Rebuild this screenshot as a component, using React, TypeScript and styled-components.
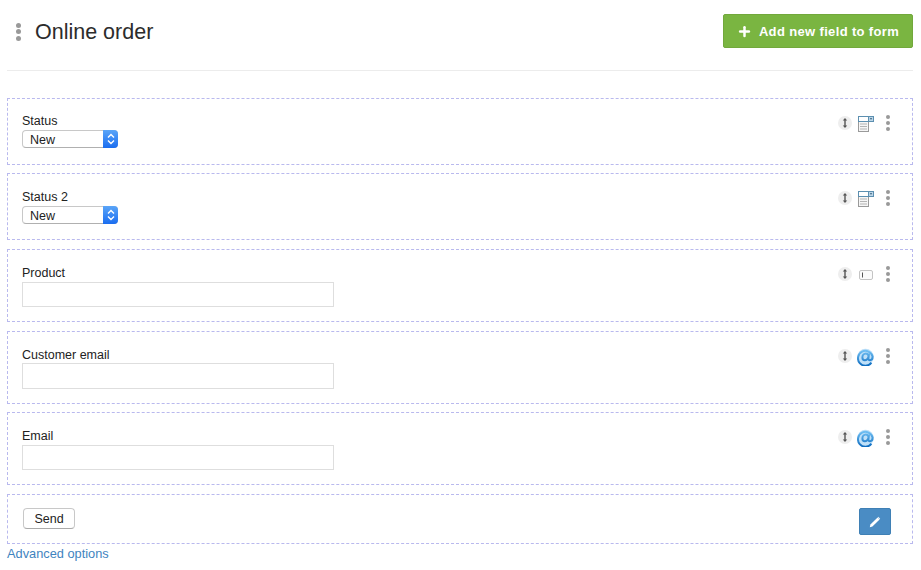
import styled, { createGlobalStyle } from 'styled-components';
import { Plus } from 'lucide-react';

const GlobalStyle = createGlobalStyle`
  html, body {
    margin: 0;
    padding: 0;
    background: #ffffff;
    font-family: 'Liberation Sans', Arial, sans-serif;
    overflow: hidden;
  }
`;

const Kebab = ({ size = 4 }: { size?: number }) => (
  <KebabWrapper $size={size}>
    <i />
    <i />
    <i />
  </KebabWrapper>
);

const MoveIcon = () => (
  <MoveBadge>
    <svg width="12" height="12" viewBox="0 0 12 12">
      <path d="M6 1 L8.2 3.6 H6.7 V8.4 H8.2 L6 11 L3.8 8.4 H5.3 V3.6 H3.8 Z" fill="#555" />
    </svg>
  </MoveBadge>
);

const SelectIcon = () => (
  <svg width="16" height="16" viewBox="0 0 16 16">
    <rect x="0.5" y="0.5" width="10" height="15" fill="#f6f6f6" stroke="#9a9a9a" />
    <rect x="0.5" y="0.5" width="15" height="5" fill="#fff" stroke="#5c8fb0" />
    <rect x="10.5" y="0.5" width="5" height="5" fill="#bcd6e8" stroke="#5c8fb0" />
    <path d="M11.8 2.2 H14.2 L13 3.8 Z" fill="#24506e" />
    <path d="M2 8 H9 M2 10.5 H9 M2 13 H9" stroke="#b4b4b4" />
  </svg>
);

const TextIcon = () => (
  <svg width="14" height="10" viewBox="0 0 14 10">
    <rect x="0.5" y="0.5" width="13" height="9" rx="1.5" fill="#fbfbfb" stroke="#c4c4c4" />
    <path d="M3.5 2.5 V7.5" stroke="#555" />
  </svg>
);

const AtIcon = () => (
  <svg width="17" height="18" viewBox="0 0 17 18">
    <defs>
      <linearGradient id="at" x1="0" y1="0" x2="0" y2="1">
        <stop offset="0" stopColor="#6fbef2" />
        <stop offset="1" stopColor="#0d6cc0" />
      </linearGradient>
    </defs>
    <circle cx="8.5" cy="9" r="8.3" fill="#a9d6f5" opacity="0.75" />
    <path
      d="M14.4 14.6 A7.4 7.4 0 1 1 15.6 8.6 C15.6 11 14.4 12.2 13 12.2 C12 12.2 11.4 11.6 11.4 10.6 L12 5.6 M11.6 8.2 C11.4 6.6 10.2 5.6 8.8 5.6 C6.8 5.6 5.4 7.4 5.4 9.4 C5.4 11.2 6.4 12.2 7.8 12.2 C9.6 12.2 11 10.4 11.6 8.2"
      fill="none"
      stroke="url(#at)"
      strokeWidth="2"
    />
  </svg>
);

const PencilIcon = () => (
  <svg width="12" height="12" viewBox="0 0 12 12">
    <path d="M0.8 11.2 L1.4 8.6 L8.6 1.4 L10.6 3.4 L3.4 10.6 Z" fill="#fff" />
    <path d="M9.3 0.8 L11.2 2.7 L10.7 3.2 L8.8 1.3 Z" fill="#fff" />
  </svg>
);

const fields = [
  { label: 'Status', type: 'select', extra: 0, nudge: 0, tall: false, icon: <SelectIcon /> },
  { label: 'Status 2', type: 'select', extra: 0, nudge: 1, tall: false, icon: <SelectIcon /> },
  { label: 'Product', type: 'text', extra: 1, nudge: 0, tall: false, icon: <TextIcon /> },
  { label: 'Customer email', type: 'text', extra: 1, nudge: 0, tall: true, icon: <AtIcon /> },
  { label: 'Email', type: 'text', extra: 0, nudge: 0, tall: false, icon: <AtIcon /> },
];

export default function App() {
  return (
    <Page>
      <GlobalStyle />
      <Header>
        <TitleGroup>
          <Kebab size={5} />
          <Title>Online order</Title>
        </TitleGroup>
        <AddButton>
          <Plus size={15} strokeWidth={4} color="#fff" />
          Add new field to form
        </AddButton>
      </Header>
      <FieldList>
        {fields.map((f) => (
          <FieldCard key={f.label} $kind={f.type} $extra={f.extra}>
            <FieldBody $nudge={f.nudge}>
              <FieldLabel $kind={f.type}>{f.label}</FieldLabel>
              {f.type === 'select' ? (
                <FakeSelect>
                  New
                  <SelectArrows>
                    <svg width="8" height="12" viewBox="0 0 8 12">
                      <path d="M1 4.5 L4 1.5 L7 4.5 M1 7.5 L4 10.5 L7 7.5" fill="none" stroke="#fff" strokeWidth="1.4" />
                    </svg>
                  </SelectArrows>
                </FakeSelect>
              ) : (
                <TextInput $tall={f.tall} />
              )}
            </FieldBody>
            <FieldTools>
              <MoveIcon />
              <IconSlot>{f.icon}</IconSlot>
              <Kebab />
            </FieldTools>
          </FieldCard>
        ))}
        <SubmitCard>
          <SendButton>Send</SendButton>
          <EditButton>
            <PencilIcon />
          </EditButton>
        </SubmitCard>
      </FieldList>
      <AdvancedLink>Advanced options</AdvancedLink>
    </Page>
  );
}

const Page = styled.div`
  width: 906px;
  margin-left: 7px;
  color: #222;
`;

const Header = styled.header`
  height: 70px;
  border-bottom: 1px solid #ececec;
  display: flex;
  align-items: flex-start;
  justify-content: space-between;
`;

const TitleGroup = styled.div`
  display: flex;
  align-items: center;
  gap: 14px;
  padding: 17px 0 0 9px;
`;

const KebabWrapper = styled.span<{ $size: number }>`
  display: inline-flex;
  flex-direction: column;
  gap: ${(p) => (p.$size === 5 ? 1.5 : 2)}px;
  i {
    display: block;
    width: ${(p) => p.$size}px;
    height: ${(p) => p.$size}px;
    border-radius: 50%;
    background: #999;
  }
`;

const Title = styled.h1`
  margin: 0;
  padding-top: 1px;
  font-size: 21.5px;
  line-height: 28px;
  font-weight: 400;
  color: #2c2c2c;
`;

const AddButton = styled.button`
  margin-top: 14px;
  width: 190px;
  height: 34px;
  display: flex;
  align-items: center;
  justify-content: center;
  gap: 7px;
  padding: 0;
  border: 1px solid #72a83c;
  border-radius: 2px;
  background: #7ab541;
  color: #fff;
  font-family: 'Liberation Sans', Arial, sans-serif;
  font-size: 13px;
  font-weight: 700;
  letter-spacing: 0.35px;
`;

const FieldList = styled.div`
  margin-top: 27px;
  display: flex;
  flex-direction: column;
  gap: 8px;
`;

const FieldCard = styled.section<{ $kind: string; $extra: number }>`
  box-sizing: border-box;
  height: ${(p) => (p.$kind === 'select' ? 67 : 73)}px;
  margin-top: ${(p) => p.$extra}px;
  border: 1px dashed #b9b9ee;
  padding: 15px 22px 0 14px;
  display: flex;
  justify-content: space-between;
  align-items: flex-start;
`;

const FieldBody = styled.div<{ $nudge: number }>`
  display: flex;
  flex-direction: column;
  padding-top: ${(p) => p.$nudge}px;
`;

const FieldLabel = styled.label<{ $kind: string }>`
  margin-top: ${(p) => (p.$kind === 'select' ? 0 : 1)}px;
  font-size: 12.5px;
  line-height: 15px;
  color: #222;
`;

const FakeSelect = styled.div`
  box-sizing: border-box;
  position: relative;
  width: 96px;
  height: 18px;
  margin-top: 1px;
  padding-left: 7px;
  border: 1px solid #c8c8c8;
  border-bottom-color: #b0b0b0;
  border-radius: 4px;
  background: #fff;
  font-size: 12.5px;
  line-height: 18px;
  color: #222;
`;

const SelectArrows = styled.span`
  position: absolute;
  top: -1px;
  right: -1px;
  width: 15px;
  height: 18px;
  display: flex;
  align-items: center;
  justify-content: center;
  border-radius: 0 4px 4px 0;
  background: linear-gradient(#5aa5f8, #1a6df0);
`;

const TextInput = styled.input<{ $tall: boolean }>`
  box-sizing: border-box;
  display: block;
  width: 312px;
  height: ${(p) => (p.$tall ? 26 : 25)}px;
  margin-top: ${(p) => (p.$tall ? 0 : 1)}px;
  border: 1px solid #dedede;
  background: #fff;
`;

const FieldTools = styled.div`
  display: flex;
  align-items: flex-start;
  gap: 5px;
  padding-top: 1px;
`;

const MoveBadge = styled.span`
  width: 14px;
  height: 14px;
  margin-top: 1px;
  border-radius: 50%;
  background: #eeeeee;
  display: flex;
  align-items: center;
  justify-content: center;
`;

const IconSlot = styled.span`
  width: 17px;
  height: 17px;
  margin-right: 7px;
  display: flex;
  align-items: center;
  justify-content: center;
`;

const SubmitCard = styled.section`
  box-sizing: border-box;
  height: 50px;
  margin-top: 1px;
  border: 1px dashed #b9b9ee;
  padding: 13px 21px 0 15px;
  display: flex;
  justify-content: space-between;
  align-items: flex-start;
`;

const SendButton = styled.button`
  box-sizing: border-box;
  width: 52px;
  height: 21px;
  padding: 0;
  border: 1px solid #c8c8c8;
  border-bottom-color: #aaaaaa;
  border-radius: 4px;
  background: #fff;
  font-family: 'Liberation Sans', Arial, sans-serif;
  font-size: 12.5px;
  color: #222;
`;

const EditButton = styled.button`
  box-sizing: border-box;
  width: 32px;
  height: 27px;
  padding: 0;
  border: 1px solid #3f80b5;
  border-radius: 2px;
  background: #4a8cc4;
  display: flex;
  align-items: center;
  justify-content: center;
`;

const AdvancedLink = styled.a`
  display: block;
  margin-top: 2px;
  font-size: 12.8px;
  line-height: 15px;
  color: #3f84c0;
`;
